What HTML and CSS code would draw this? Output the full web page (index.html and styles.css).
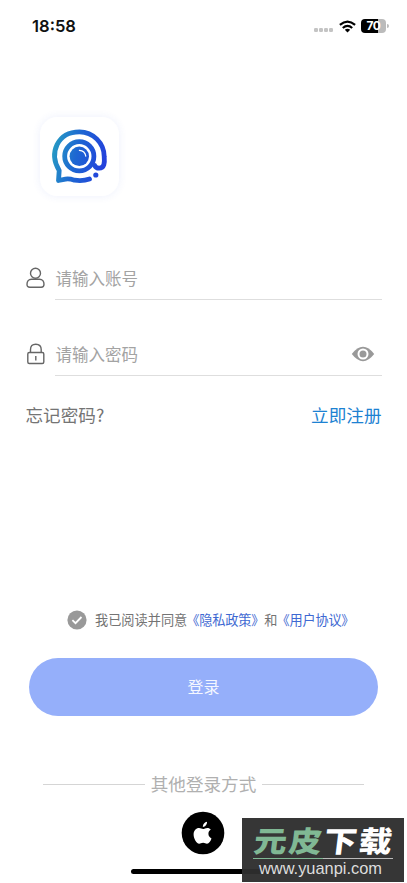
FILE: index.html
```html
<!DOCTYPE html>
<html lang="zh-CN">
<head>
<meta charset="utf-8">
<title>登录</title>
<link rel="stylesheet" href="styles.css">
</head>
<body>
<main class="screen">
  <header class="status">
    <span class="time">18:58</span>
    <div class="indicators">
      <span class="signal"><i></i><i></i><i></i><i></i></span>
      <svg class="wifi" width="17" height="13" viewBox="0 0 17 13">
        <g fill="none" stroke="#000" stroke-width="2.2">
          <path d="M.9 4.9Q8.5-1.7 16.1 4.9"/>
          <path d="M3.8 8Q8.5 3.9 13.2 8"/>
        </g>
        <path d="M5.8 9.8Q8.5 7.6 11.2 9.8L8.5 12.6Z"/>
      </svg>
      <span class="battery"><b>70</b></span>
      <i class="cap"></i>
    </div>
  </header>

  <div class="logo">
    <svg width="80" height="80" viewBox="0 0 80 80">
      <defs>
        <linearGradient id="blue" gradientUnits="userSpaceOnUse" x1="12" y1="32" x2="66" y2="44">
          <stop offset="0" stop-color="#269bc4"/>
          <stop offset=".45" stop-color="#1d66d2"/>
          <stop offset="1" stop-color="#2440dc"/>
        </linearGradient>
      </defs>
      <g fill="none" stroke="url(#blue)" stroke-width="4.8" stroke-linecap="round" stroke-linejoin="round">
        <path d="M49.5 62Q43 64.4 34.5 63.2Q29 61.4 25.5 62.1L18.5 63.5L19.2 53.5C8.5 36 17.5 14.8 39.5 14.8C53 14.8 64.2 26 64.2 39.5C64.8 46 64.3 51.2 59.2 51.2C55.8 51.2 54.8 48.6 54.8 48.6"/>
        <circle cx="39.3" cy="39.3" r="14.6"/>
      </g>
      <circle cx="39.3" cy="39.3" r="9.7" fill="url(#blue)"/>
      <path d="M39.4 33.3Q45 33.7 45.8 39.2" fill="none" stroke="#fff" stroke-width="1.2" stroke-linecap="round"/>
      <circle cx="55.8" cy="58" r="2.6" fill="url(#blue)"/>
    </svg>
  </div>

  <form class="form">
    <div class="field">
      <svg class="lead" width="20" height="22" viewBox="0 0 20 22">
        <g fill="none" stroke="#666" stroke-width="1.4">
          <circle cx="9.5" cy="6.3" r="5"/>
          <path d="M5.5 12.2H13.5C16.5 12.2 18 14.8 18 17.2C18 19.5 17 20.2 15.2 20.2H3.8C2 20.2 1 19.5 1 17.2C1 14.8 2.5 12.2 5.5 12.2Z"/>
        </g>
      </svg>
      <div class="input">请输入账号</div>
    </div>
    <div class="field">
      <svg class="lead" width="20" height="22" viewBox="0 0 20 22">
        <g fill="none" stroke="#666" stroke-width="1.4">
          <rect x="1.8" y="9.5" width="16" height="11" rx="1.5"/>
          <path d="M4.5 9.5V6.5Q4.5 1.2 9.8 1.2Q15.2 1.2 15.2 6.5V9.5M9.8 13V17.5"/>
        </g>
      </svg>
      <div class="input">请输入密码
        <svg class="eye" width="24" height="16" viewBox="0 0 24 16">
          <path d="M.8 8Q12-6.4 23.2 8Q12 22.4.8 8Z" fill="#999"/>
          <circle cx="12" cy="8" r="4.5" fill="#999" stroke="#fff" stroke-width="2"/>
        </svg>
      </div>
    </div>
  </form>

  <div class="links"><span>忘记密码?</span><a>立即注册</a></div>

  <div class="agreement">
    <svg width="20" height="20" viewBox="0 0 20 20">
      <circle cx="10" cy="10" r="9.6" fill="#999"/>
      <path d="M5.4 10.2L8.5 13.2L14.5 7" fill="none" stroke="#fff" stroke-width="1.8"/>
    </svg>
    <p>我已阅读并同意<a>《隐私政策》</a>和<a>《用户协议》</a></p>
  </div>

  <div class="login">登录</div>

  <div class="other"><span>其他登录方式</span></div>

  <svg class="apple" width="44" height="44" viewBox="0 0 44 44">
    <circle cx="22" cy="22" r="21.3"/>
    <g fill="#fff">
      <path d="M21.8 15.9C21.7 13.2 23.7 11 26 10.7C26.2 13.4 24.2 15.7 21.8 15.9Z"/>
      <path d="M29.8 18.6C26.3 20.8 26.8 25.8 30.5 27.4C29.6 29.9 28 32.7 26 32.7C24.5 32.7 23.9 31.8 22.1 31.8C20.3 31.8 19.6 32.7 18.2 32.7C15.3 32.7 12.6 27.3 12.6 23.5C12.6 19.4 15.2 17 18 17C19.7 17 20.9 18 22.1 18C23.2 18 24.5 16.9 26.4 16.9C27.8 16.9 29 17.5 29.8 18.6Z"/>
    </g>
  </svg>

  <div class="home"></div>
  <aside class="watermark">
    <div class="brand"><span>元皮</span>下载</div>
    <div class="rule"></div>
    <div class="site">www.yuanpi.com</div>
  </aside>
</main>
</body>
</html>
```
FILE: styles.css
```css
* { box-sizing: border-box; }
body {
  margin: 0;
  background: #fff;
  font-family: "Noto Sans CJK SC", sans-serif;
  font-weight: 400;
  color: #747474;
}
.screen {
  position: relative;
  display: flex;
  flex-direction: column;
  width: 407px;
  height: 883px;
  overflow: hidden;
}
svg { display: block; flex: none; }

.status {
  display: flex;
  justify-content: space-between;
  align-items: center;
  height: 52px;
  padding: 0 18px 0 32px;
}
.time { font: 600 16.6px Inter, sans-serif; color: #111; }
.indicators { display: flex; align-items: center; }
.signal { display: flex; gap: 1.4px; margin: 8px 6px 0 0; }
.signal i { width: 3.6px; height: 3.6px; border-radius: 1.2px; background: #c4c4c4; }
.wifi { margin-right: 5px; }
.battery {
  width: 25px;
  height: 14px;
  border-radius: 4px;
  background: linear-gradient(90deg, #000 70%, #bbb 70%);
  color: #fff;
  font: 700 12px/14px Inter, sans-serif;
  letter-spacing: -.4px;
  text-align: center;
}
.battery b { font-weight: 700; }
.cap { width: 2px; height: 4px; margin-left: 1px; border-radius: 0 2px 2px 0; background: #bbb; }

.logo {
  width: 79px;
  height: 79px;
  margin: 65px 0 1px 39.6px;
  border-radius: 17px;
  background: #fff;
  box-shadow: 0 0 9px rgba(60, 90, 220, .09);
}

.form { display: flex; flex-direction: column; gap: 18px; margin: 60px 25px 0 26px; }
.field { display: flex; height: 58px; padding-top: 15px; }
.field:first-child { height: 43px; padding-top: 0; }
.lead { margin: 10px 9px 0 0; }
.input {
  display: flex;
  justify-content: space-between;
  align-items: center;
  flex: 1;
  height: 43px;
  padding: 0 0 1px .6px;
  border-bottom: 1px solid #dedede;
  font-size: 16.5px;
  line-height: 24px;
  color: #a3a3a3;
}
.eye { margin-right: 7px; }

.links {
  display: flex;
  justify-content: space-between;
  margin: 26px 25.5px 0 25.5px;
  font-size: 17.6px;
  line-height: 26px;
}
.links a { color: #1d82d2; }

.agreement {
  display: flex;
  align-items: center;
  height: 20px;
  margin: 182px 0 0 67px;
  font-size: 13.2px;
  white-space: nowrap;
}
.agreement p { margin: -1px 0 0 8px; line-height: 20px; }
.agreement a { margin-left: -1px; color: #3e69d2; letter-spacing: -.2px; }

.login {
  height: 58px;
  margin: 28px 29px 0;
  border-radius: 29px;
  background: #95affa;
  color: #f4f7ff;
  font-size: 16px;
  line-height: 57px;
  text-align: center;
}

.other {
  display: flex;
  align-items: center;
  gap: 6px;
  height: 26px;
  margin: 55px 43px 0;
  color: #b0b0b0;
  font-size: 17.6px;
  line-height: 26px;
}
.other::before, .other::after { content: ""; flex: 1; height: 1px; background: #d5d5d5; }

.apple { margin: 14px 0 0 181px; }
.home { width: 144px; height: 5px; margin: 14px 0 0 131px; border-radius: 3px; background: #000; }

.watermark {
  position: absolute;
  right: 3px;
  bottom: 1px;
  width: 162px;
  height: 64px;
  padding: 8px 11px 0;
  background: rgba(46, 46, 46, .96);
  color: #fff;
}
.brand {
  height: 32px;
  padding-left: 1px;
  font-size: 33px;
  font-weight: 900;
  line-height: 26px;
  letter-spacing: 2px;
  transform: skewX(-7deg) scaleY(.88);
  white-space: nowrap;
}
.brand span { color: #80b894; }
.rule { height: 1px; background: linear-gradient(90deg, #80b894 50%, #bbb 50%); }
.site {
  margin-left: 6px;
  color: #ddd;
  font: 400 16.4px/18px "Liberation Sans", sans-serif;
}
```
